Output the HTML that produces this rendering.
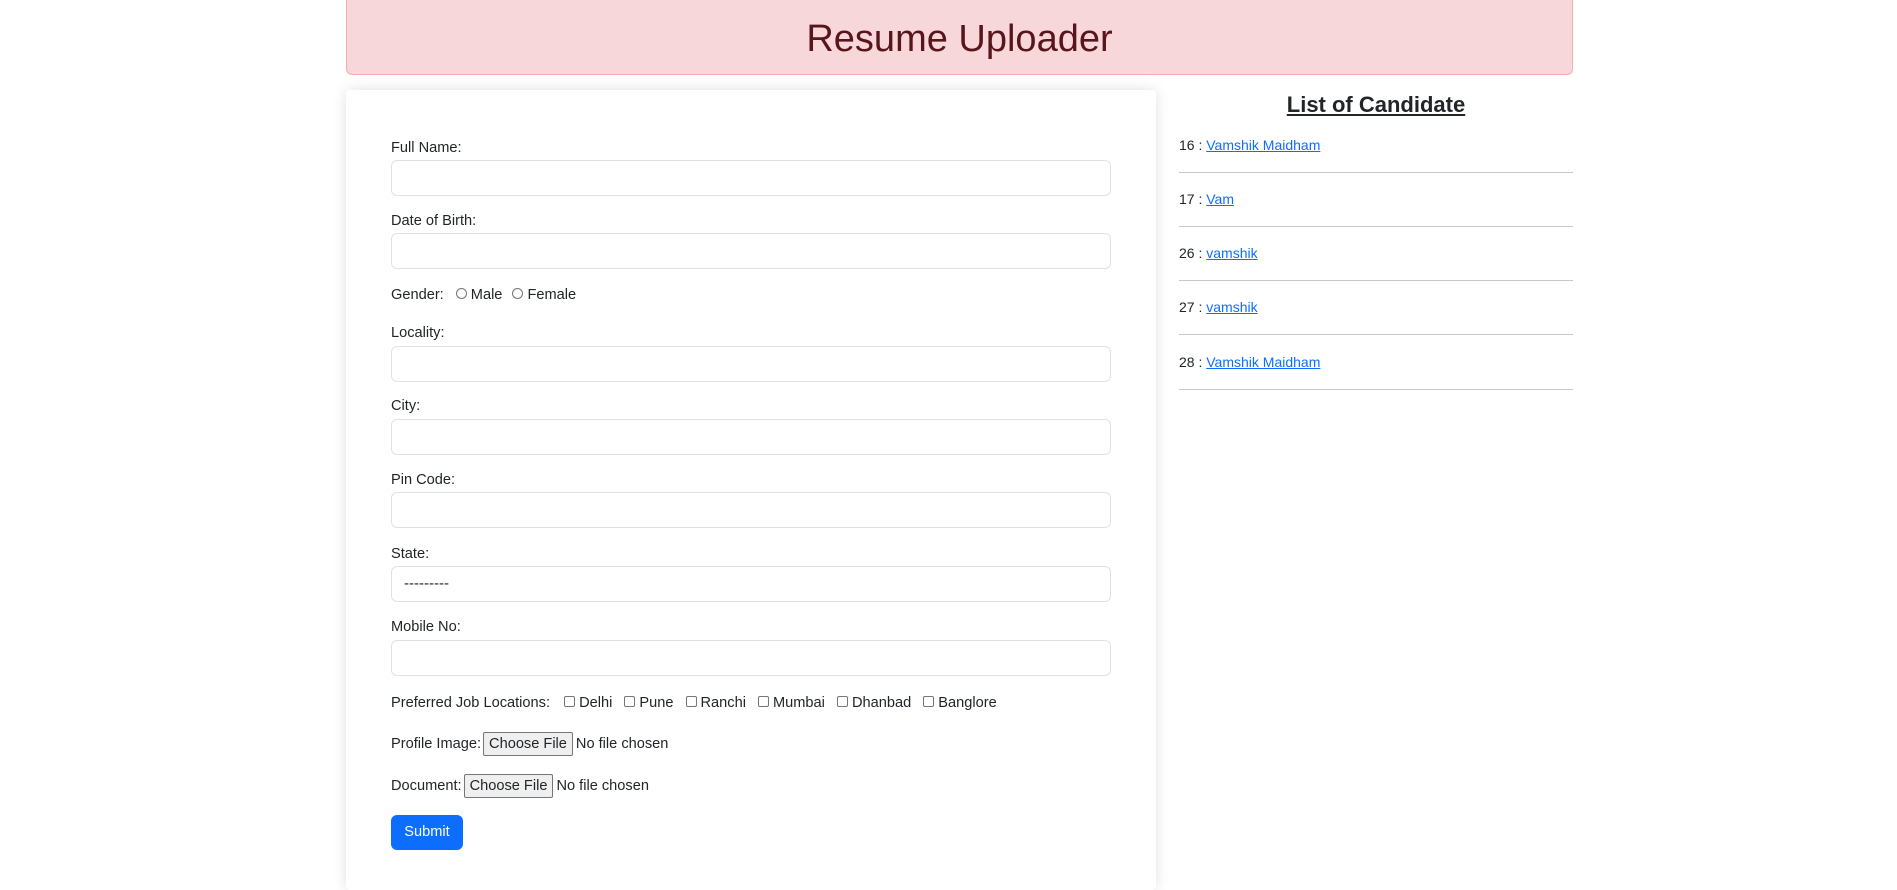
<!DOCTYPE html>
<html><head><meta charset="utf-8"><style>
*{box-sizing:border-box;margin:0;padding:0}
body{width:1897px;height:862px;background:#fff;font-family:"Liberation Sans",sans-serif;color:#212529;position:relative;overflow:hidden;font-size:15px}
.hdr{position:absolute;left:346px;top:-1px;width:1227px;height:76px;background:#f8d7da;border:1px solid #f1aeb5;border-radius:0 0 6px 6px;text-align:center;color:#58151c;font-size:38px;line-height:78px}
.card{position:absolute;left:346px;top:90px;width:810px;height:800px;background:#fff;box-shadow:0 0 14px rgba(0,0,0,.12);border-radius:4px}
.lbl{position:absolute;left:391px;font-size:14.6px;line-height:18px;white-space:nowrap}
.inp{position:absolute;left:391px;width:720px;height:36px;border:1px solid #dee2e6;border-radius:6px;background:#fff}
.rad{display:inline-block;width:11px;height:11px;border:1px solid #767676;border-radius:50%;vertical-align:0;margin:0 4px 0 8px}
.chk{display:inline-block;width:11px;height:11px;border:1px solid #767676;border-radius:2px;vertical-align:0;margin:0 4px 0 8px}
.btnf{display:inline-block;background:#efefef;border:1px solid #767676;border-radius:2px;padding:2px 5px;font-size:14.6px;margin:0 3px 0 2px}
.sub{position:absolute;left:391px;top:815px;width:72px;height:35px;background:#0d6efd;color:#fff;border-radius:6px;text-align:center;line-height:35px;font-size:14.6px}
h2{position:absolute;left:1179px;width:394px;top:90px;text-align:center;font-size:22px;font-weight:bold;text-decoration:underline;line-height:30px}
.it{position:absolute;left:1179px;font-size:14px;line-height:18px}
.it a{color:#0d6efd;text-decoration:underline}
.hr{position:absolute;left:1179px;width:394px;height:1px;background:#c8c8c8}
</style></head><body>
<div class="hdr">Resume Uploader</div>
<div class="card"></div>
<div class="lbl" style="top:139px">Full Name:</div><div class="inp" style="top:160px"></div>
<div class="lbl" style="top:212px">Date of Birth:</div><div class="inp" style="top:233px"></div>
<div class="lbl" style="top:286px">Gender: <span class="rad"></span>Male <span class="rad" style="margin-left:6px"></span>Female</div>
<div class="lbl" style="top:324px">Locality:</div><div class="inp" style="top:346px"></div>
<div class="lbl" style="top:397px">City:</div><div class="inp" style="top:419px"></div>
<div class="lbl" style="top:471px">Pin Code:</div><div class="inp" style="top:492px"></div>
<div class="lbl" style="top:545px">State:</div><div class="inp" style="top:566px;padding-left:12px;line-height:34px">---------</div>
<div class="lbl" style="top:618px">Mobile No:</div><div class="inp" style="top:640px"></div>
<div class="lbl" style="top:694px">Preferred Job Locations: <span class="chk" style="margin-left:10px"></span>Delhi <span class="chk"></span>Pune <span class="chk"></span>Ranchi <span class="chk"></span>Mumbai <span class="chk"></span>Dhanbad <span class="chk"></span>Banglore</div>
<div class="lbl" style="top:732px">Profile Image:<span class="btnf">Choose File</span>No file chosen</div>
<div class="lbl" style="top:774px">Document:<span class="btnf">Choose File</span>No file chosen</div>
<div class="sub">Submit</div>
<h2>List of Candidate</h2>
<div class="it" style="top:136px">16 : <a>Vamshik Maidham</a></div><div class="hr" style="top:172px"></div>
<div class="it" style="top:190px">17 : <a>Vam</a></div><div class="hr" style="top:226px"></div>
<div class="it" style="top:244px">26 : <a>vamshik</a></div><div class="hr" style="top:280px"></div>
<div class="it" style="top:298px">27 : <a>vamshik</a></div><div class="hr" style="top:334px"></div>
<div class="it" style="top:353px">28 : <a>Vamshik Maidham</a></div><div class="hr" style="top:389px"></div>
</body></html>
